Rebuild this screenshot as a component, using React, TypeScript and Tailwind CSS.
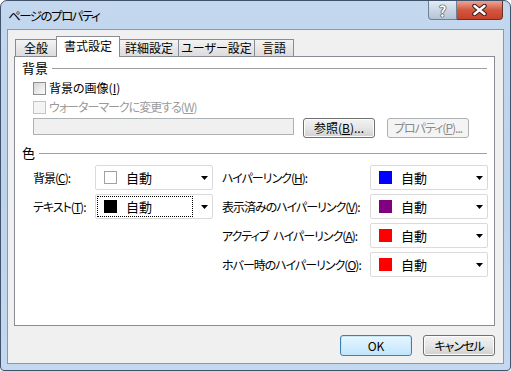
import type { ReactNode } from "react";

const font = { fontFamily: '"Noto Sans CJK JP", "Noto Sans", sans-serif' };

const Arrow = () => (
  <svg width="7" height="4" viewBox="0 0 7 4">
    <polygon points="0,0 7,0 3.5,4" fill="#000" />
  </svg>
);

const Check = ({ disabled, children }: { disabled?: boolean; children: ReactNode }) => (
  <div className="flex items-center h-[16px]">
    <span
      className={`w-[13px] h-[13px] border ${
        disabled
          ? "border-[#c4c4c4] bg-[#f4f4f4]"
          : "border-[#8e8f8f] bg-linear-to-br from-[#d6d6d6] to-[#fbfbfb]"
      }`}
    />
    <span className={`ml-[3px] ${disabled ? "text-[#9a9a9a] tracking-[-1px]" : "text-black"}`}>{children}</span>
  </div>
);

const Combo = ({ color, focus }: { color: string; focus?: boolean }) => (
  <div className="relative w-[118px] h-[25px] border border-[#dadada] rounded-[2px] bg-white flex items-center pl-[8px] pr-[4px]">
    {focus && (
      <span className="absolute left-px top-px bottom-px right-[19px] border border-dotted border-black" />
    )}
    <span
      className={`w-[13px] h-[13px] border ${color === "white" ? "border-[#a0a0a0] bg-white" : ""}`}
      style={color === "white" ? undefined : { background: color, borderColor: color }}
    />
    <span className="ml-[9px] flex-1 text-[13px]">自動</span>
    <Arrow />
  </div>
);

const Btn = ({ children, w, disabled, primary }: { children: ReactNode; w: string; disabled?: boolean; primary?: boolean }) => (
  <div
    className={`${w} flex items-center justify-center rounded-[3px] border ${
      disabled
        ? "border-[#adb2b5] bg-[#f4f4f4] text-[#8a8a8a]"
        : primary
        ? "border-[#3c7fb1] bg-linear-to-b from-[#eaf6fd] to-[#bee6fd] shadow-[inset_0_0_0_1px_#c6e6f8]"
        : "border-[#707070] bg-linear-to-b from-[#f2f2f2] via-[#e6e6e6] to-[#d0d0d0] shadow-[inset_0_0_0_1px_#fcfcfc]"
    }`}
  >
    {children}
  </div>
);

const Tab = ({ label, w, active }: { label: string; w: string; active?: boolean }) => (
  <div
    className={`${w} -ml-px flex justify-center border-t border-l border-r border-[#898c95] ${
      active
        ? "h-[21px] -mb-px bg-white relative z-10 pt-[1px]"
        : "h-[17px] bg-linear-to-b from-[#f3f3f3] to-[#dcdcdc]"
    }`}
  >
    {label}
  </div>
);

const Group = ({ title }: { title: string }) => (
  <div className="flex items-center h-[16px] pl-[7px] pr-[7px]">
    <span className="text-[13px]">{title}</span>
    <span className="flex-1 h-px bg-[#a0a0a0] ml-[4px]" />
  </div>
);

const Row = ({ label, w, color, focus }: { label: ReactNode; w: string; color: string; focus?: boolean }) => (
  <div className="flex items-center h-[25px]">
    <span className={`${w} tracking-[-1px]`}>{label}</span>
    <Combo color={color} focus={focus} />
  </div>
);

export default function App() {
  return (
    <div
      className="w-[511px] h-[371px] bg-white text-[12px] leading-[16px] text-black whitespace-nowrap [font-feature-settings:'palt']"
      style={font}
    >
      <div className="w-[511px] h-[371px] flex flex-col rounded-t-[7px] rounded-b-[4px] border border-[#40536b] bg-linear-to-b from-[#c3d8ef] via-[#bcd3ec] to-[#c4d9f0] px-[6px] pb-[6px]">
        <div className="h-[28px] flex items-start justify-between">
          <span className="pt-[7px] pl-[1px] text-[12.5px] tracking-[-1.5px]">ページのプロパティ</span>
          <div className="flex mr-px">
            <div className="w-[29px] h-[19px] rounded-bl-[4px] border border-t-0 border-[#6f7f95] bg-linear-to-b from-[#e3ebf4] to-[#b3c3d7] flex items-center justify-center text-white font-bold text-[15px] leading-[15px] [text-shadow:0_0_1px_#222,0_0_1px_#222,0_0_1px_#222]">
              ?
            </div>
            <div className="w-[46px] h-[19px] rounded-br-[4px] border border-l-0 border-t-0 border-[#6b3127] bg-linear-to-b from-[#e8a597] via-[#d4563f] to-[#c7412a] flex items-center justify-center">
              <svg width="15" height="12" viewBox="0 0 15 12">
                <path d="M2.5 2 L12.5 10 M12.5 2 L2.5 10" stroke="#3a1a16" strokeWidth="4.5" strokeLinecap="round" />
                <path d="M2.5 2 L12.5 10 M12.5 2 L2.5 10" stroke="#fff" strokeWidth="2.5" strokeLinecap="round" />
              </svg>
            </div>
          </div>
        </div>

        <div className="flex-1 border border-[#8799ae] bg-[#f0f0f0] flex flex-col">
          <div className="h-[26px] pt-[6px] pl-[8px] flex items-end">
            <Tab label="全般" w="w-[42px]" />
            <Tab label="書式設定" w="w-[64px]" active />
            <Tab label="詳細設定" w="w-[60px]" />
            <Tab label="ユーザー設定" w="w-[77px]" />
            <Tab label="言語" w="w-[40px]" />
          </div>

          <div className="ml-[6px] w-[481px] h-[270px] border border-[#898c95] bg-white flex flex-col pt-[3px]">
            <Group title="背景" />
            <div className="pl-[18px] mt-[4px] flex flex-col gap-[3px]">
              <Check>
                背景の画像(<u>I</u>)
              </Check>
              <Check disabled>
                ウォーターマークに変更する(<u>W</u>)
              </Check>
            </div>
            <div className="pl-[18px] mt-[3px] flex items-start">
              <div className="w-[261px] h-[17px] border border-[#adb2b5] bg-[#f0f0f0]" />
              <div className="ml-[9px] flex gap-[12px]">
                <Btn w="w-[72px] h-[20px]">
                  参照(<u>B</u>)...
                </Btn>
                <Btn w="w-[82px] h-[20px]" disabled>
                  <span className="tracking-[-1px]">
                    プロパティ(<u>P</u>)...
                  </span>
                </Btn>
              </div>
            </div>

            <div className="mt-[7px]">
              <Group title="色" />
            </div>

            <div className="mt-[4px] pl-[18px] flex">
              <div className="flex flex-col gap-[4px]">
                <Row w="w-[62px]" color="white" label={<>背景(<u>C</u>):</>} />
                <Row w="w-[62px]" color="#000000" focus label={<>テキスト(<u>T</u>):</>} />
              </div>
              <div className="ml-[9px] flex flex-col gap-[4px]">
                <Row w="w-[148px]" color="#0000ff" label={<>ハイパーリンク(<u>H</u>):</>} />
                <Row w="w-[148px]" color="#800080" label={<>表示済みのハイパーリンク(<u>V</u>):</>} />
                <Row
                  w="w-[148px]"
                  color="#ff0000"
                  label={
                    <>
                      アクティブ<span className="ml-[5px]">ハイパーリンク(<u>A</u>):</span>
                    </>
                  }
                />
                <Row w="w-[148px]" color="#ff0000" label={<>ホバー時のハイパーリンク(<u>O</u>):</>} />
              </div>
            </div>
          </div>

          <div className="mt-[9px] flex justify-end gap-[11px] pr-[8px]">
            <Btn w="w-[72px] h-[21px]" primary>
              OK
            </Btn>
            <Btn w="w-[72px] h-[21px]">
              <span className="tracking-[-1px]">キャンセル</span>
            </Btn>
          </div>
        </div>
      </div>
    </div>
  );
}
